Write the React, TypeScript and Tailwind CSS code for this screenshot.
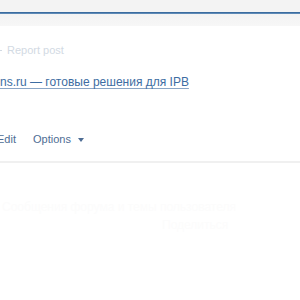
export default function App() {
  return (
    <main className="h-[300px] w-[300px] overflow-hidden bg-white font-['Liberation_Sans',Arial,sans-serif]">
      <div className="h-[12px] bg-[#f3f3f3]" />
      <div className="h-[1px] bg-[#3b6c9f]" />
      <div className="h-[1px] bg-[#5e8ab6]" />
      <div className="h-[12px] bg-gradient-to-b from-[#f3f3f3] to-[#f7f7f7]" />

      <div className="mt-[18px] flex items-center text-[11px] leading-[13px] text-[#d2dae3]">
        <span className="-ml-[1px] mr-[5px] h-[1px] w-[3px] bg-[#d2dae3]" />
        <span>Report post</span>
      </div>

      <a className="mt-[19px] block whitespace-nowrap text-[12px] leading-[13px] text-[#3d6da2] underline decoration-[#8aa6c6] underline-offset-[2px]">
        ns.ru — готовые решения для IPB
      </a>

      <div className="mt-[44px] flex items-center text-[11px] leading-[13px] text-[#4e6d94]">
        <span className="-ml-[3px]">Edit</span>
        <span className="ml-[17px]">Options</span>
        <span className="ml-[7px] h-0 w-0 border-x-[3px] border-t-[4px] border-x-transparent border-t-[#4e6d94]" />
      </div>

      <div className="mt-[15px] h-[2px] bg-[#f0f0f0]" />

      <div className="mt-[38px] flex flex-col gap-[6px] px-[2px] text-[12px] leading-[12px] text-[#fcfcfc]">
        <span>Сообщения форума и темы пользователя</span>
        <span className="pl-[160px]">Поделиться</span>
      </div>

      <div className="mt-[88px] h-[13px] bg-[#f3f3f3]" />
    </main>
  );
}
